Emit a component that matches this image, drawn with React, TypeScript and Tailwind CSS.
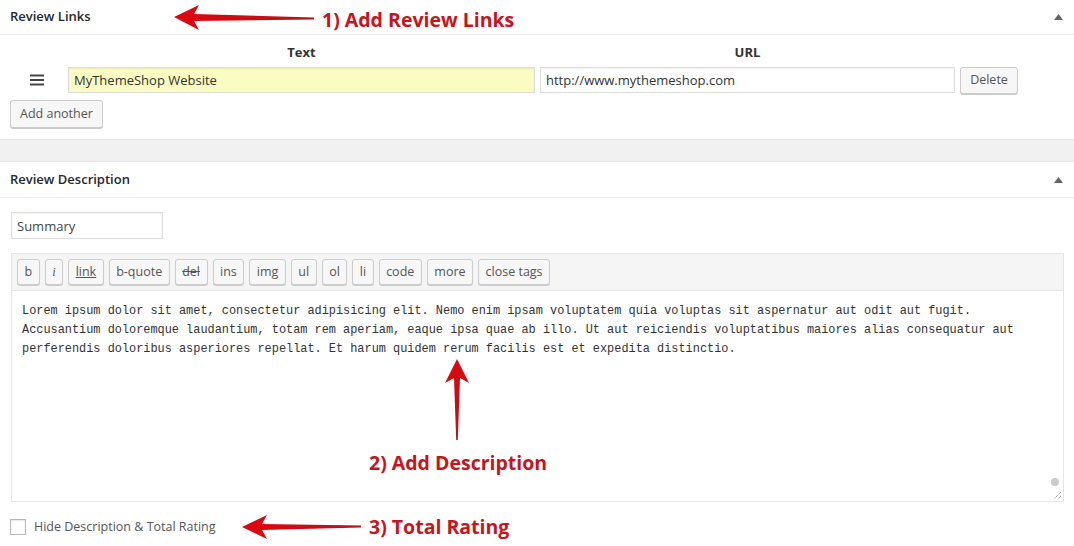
import React from "react";

const ui = "font-['Open_Sans',sans-serif]";

function Btn({ children, className = "" }: { children: React.ReactNode; className?: string }) {
  return (
    <button
      className={`h-[26px] px-[6.5px] text-[12.5px] leading-none text-[#555] bg-[#f7f7f7] border border-[#ccc] rounded-[3px] shadow-[0_1px_0_#ccc] ${className}`}
    >
      {children}
    </button>
  );
}

function Caret() {
  return (
    <svg width="9" height="6" viewBox="0 0 9 6" className="mr-[11px]">
      <path d="M4.5 0L9 6H0z" fill="#666" />
    </svg>
  );
}

function Annotations() {
  return (
    <svg className="absolute inset-0 pointer-events-none" width="1074" height="546">
      <defs>
        <linearGradient id="rh" x1="0" x2="1" y1="0" y2="0">
          <stop offset="0" stopColor="#e0060e" />
          <stop offset="1" stopColor="#b8121a" />
        </linearGradient>
        <linearGradient id="rv" x1="0" x2="0" y1="0" y2="1">
          <stop offset="0" stopColor="#e0060e" />
          <stop offset="1" stopColor="#b8121a" />
        </linearGradient>
      </defs>
      {/* arrow 1 */}
      <path d="M174 17 L199 5 L194 14 L314 17.5 L314 19.5 L194 21 L199 30 Z" fill="url(#rh)" />
      {/* arrow 2 */}
      <path d="M457 359 L469 383 L460 378 L457.8 440 L456.2 440 L454 378 L445 383 Z" fill="url(#rv)" />
      {/* arrow 3 */}
      <path d="M242 527 L267 515 L262 524 L361 525.5 L361 527.5 L262 530 L267 539 Z" fill="url(#rh)" />
    </svg>
  );
}

export default function App() {
  const tools = ["b", "i", "link", "b-quote", "del", "ins", "img", "ul", "ol", "li", "code", "more", "close tags"];

  return (
    <div className={`relative w-[1074px] h-[546px] overflow-hidden bg-white text-[#444] ${ui}`}>
      {/* Review Links panel */}
      <section className="border-b border-[#e5e5e5]">
        <div className="h-[35px] flex items-center justify-between pl-[10px] border-b border-[#eee]">
          <h2 className="text-[13px] font-semibold text-[#23282d]">Review Links</h2>
          <Caret />
        </div>
        <div className="pl-[10px] pt-[8px] pb-[11px]">
          <div className="flex text-[13px] font-bold text-[#333] h-[20px] items-center">
            <div className="w-[58px]" />
            <div className="w-[467px] text-center">Text</div>
            <div className="w-[5px]" />
            <div className="w-[415px] text-center">URL</div>
          </div>
          <div className="flex items-start gap-[5px] mt-[4px]">
            <div className="w-[53px] h-[26px] flex items-center pl-[20px]">
              <svg width="14" height="12" viewBox="0 0 14 12">
                <rect x="0" y="0.5" width="14" height="2" fill="#444" />
                <rect x="0" y="5" width="14" height="2" fill="#444" />
                <rect x="0" y="9.5" width="14" height="2" fill="#444" />
              </svg>
            </div>
            <input
              readOnly
              value="MyThemeShop Website"
              className="w-[467px] h-[26px] px-[5px] text-[13px] text-[#333] bg-[#fbfcc2] border border-[#ddd] shadow-[inset_0_1px_2px_rgba(0,0,0,0.07)] outline-none"
            />
            <input
              readOnly
              value="http://www.mythemeshop.com"
              className="w-[415px] h-[26px] px-[5px] text-[13px] text-[#333] bg-white border border-[#ddd] shadow-[inset_0_1px_2px_rgba(0,0,0,0.07)] outline-none"
            />
            <Btn className="w-[58px] h-[27px]">Delete</Btn>
          </div>
          <Btn className="mt-[6px] h-[28px] px-[9px]">Add another</Btn>
        </div>
      </section>

      <div className="h-[21px] bg-[#f1f1f1]" />

      {/* Review Description panel */}
      <section className="border-t border-[#e5e5e5]">
        <div className="h-[36px] flex items-center justify-between pl-[10px] border-b border-[#eee]">
          <h2 className="text-[13px] font-semibold text-[#23282d]">Review Description</h2>
          <Caret />
        </div>
        <div className="px-[11px] pt-[14px]">
          <input
            readOnly
            value="Summary"
            className="w-[152px] h-[27px] px-[5px] text-[13px] text-[#444] bg-white border border-[#ddd] shadow-[inset_0_1px_2px_rgba(0,0,0,0.07)] outline-none"
          />
          <div className="mt-[14px] w-[1053px] border border-[#e5e5e5]">
            <div className="h-[37px] bg-[#f5f5f5] border-b border-[#e5e5e5] flex items-center gap-[5px] pl-[5px]">
              {tools.map((t) => (
                <Btn key={t}>
                  {t === "i" ? (
                    <i className="font-['Liberation_Serif',serif]">i</i>
                  ) : t === "link" ? (
                    <span className="underline">link</span>
                  ) : t === "del" ? (
                    <span className="line-through">del</span>
                  ) : (
                    t
                  )}
                </Btn>
              ))}
            </div>
            <div className="relative h-[210px] bg-white px-[10px] pt-[11px]">
              <div className="font-['Liberation_Mono',monospace] text-[11.9px] leading-[19px] text-[#333] whitespace-pre">
                {"Lorem ipsum dolor sit amet, consectetur adipisicing elit. Nemo enim ipsam voluptatem quia voluptas sit aspernatur aut odit aut fugit.\nAccusantium doloremque laudantium, totam rem aperiam, eaque ipsa quae ab illo. Ut aut reiciendis voluptatibus maiores alias consequatur aut\nperferendis doloribus asperiores repellat. Et harum quidem rerum facilis est et expedita distinctio."}
              </div>
              <div className="absolute right-[4px] bottom-[15px] w-[8px] h-[8px] rounded-full bg-[#ccc]" />
              <svg className="absolute right-[1px] bottom-[1px]" width="9" height="9" viewBox="0 0 9 9">
                <path d="M8 1L1 8M8 5L5 8" stroke="#777" strokeWidth="1" strokeDasharray="1 1" />
              </svg>
            </div>
          </div>
        </div>
        <label className="flex items-center gap-[8px] pl-[10px] mt-[16px] text-[12.5px] text-[#555]">
          <span className="w-[16px] h-[16px] border border-[#b4b9be] bg-white shadow-[inset_0_1px_2px_rgba(0,0,0,0.1)]" />
          Hide Description &amp; Total Rating
        </label>
      </section>

      <Annotations />
      <div className="absolute left-[322px] top-[5px] font-['Open_Sans',sans-serif] font-bold text-[19.5px] text-[#c8141b]">
        1) Add Review Links
      </div>
      <div className="absolute left-[369px] top-[448px] font-['Open_Sans',sans-serif] font-bold text-[19.5px] text-[#c8141b]">
        2) Add Description
      </div>
      <div className="absolute left-[369px] top-[512px] font-['Open_Sans',sans-serif] font-bold text-[19.5px] text-[#c8141b]">
        3) Total Rating
      </div>
    </div>
  );
}
